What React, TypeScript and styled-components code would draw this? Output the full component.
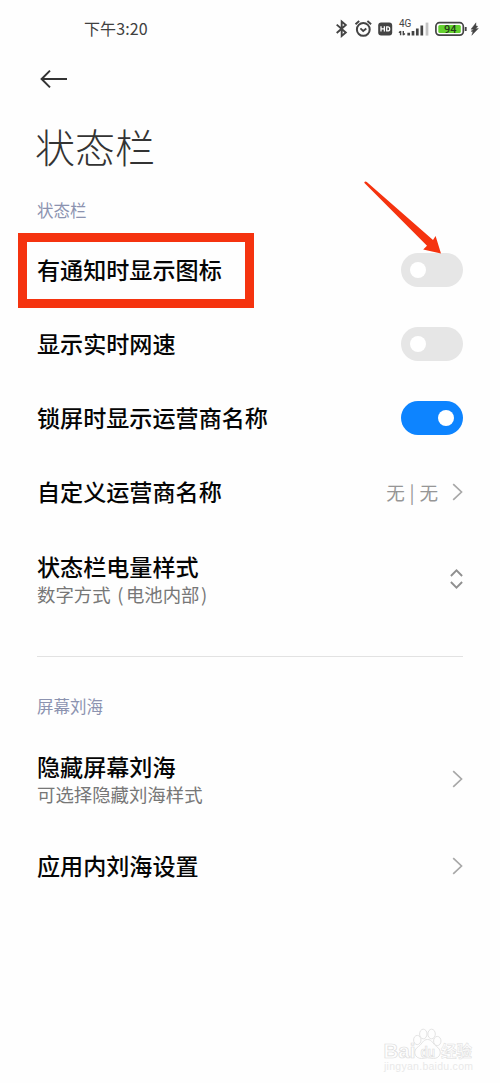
import React from 'react';
import styled, { createGlobalStyle } from 'styled-components';

const GlobalStyle = createGlobalStyle`
  * { box-sizing: border-box; }
  body {
    margin: 0;
    background: #fefefe;
    font-family: "Noto Sans CJK SC", sans-serif;
  }
`;

const Screen = styled.main`
  position: relative;
  width: 500px;
  height: 1083px;
  overflow: hidden;
  background: #fefefe;
  display: flex;
  flex-direction: column;
`;

const StatusBar = styled.header`
  height: 58px;
  padding: 0 20px 0 84px;
  display: flex;
  align-items: center;
  justify-content: space-between;
`;

const Clock = styled.time`
  padding-bottom: 2px;
  font-size: 16px;
  line-height: 20px;
  letter-spacing: 0.1px;
  color: #404040;
`;

const StatusIcons = styled.svg`
  width: 146px;
  height: 24px;
`;

const NavBar = styled.nav`
  height: 42px;
  padding-left: 40px;
  display: flex;
  align-items: center;
`;

const BackButton = styled.button`
  display: flex;
  padding: 0;
  border: 0;
  background: none;
`;

const PageTitle = styled.h1`
  margin: 0;
  padding: 16px 0 1px 35px;
  font-size: 40px;
  line-height: 60px;
  font-weight: 300;
  color: #333;
`;

const Section = styled.section`
  padding: 0 37px;
`;

const SectionLabel = styled.h2<{ $gap: number }>`
  margin: 0;
  padding-top: ${(p) => p.$gap}px;
  padding-bottom: 10px;
  font-size: 16.5px;
  line-height: 26px;
  font-weight: 400;
  color: #8c93b0;
`;

const Row = styled.div<{ $tall?: boolean }>`
  position: relative;
  height: ${(p) => (p.$tall ? 100 : 74)}px;
  display: flex;
  align-items: center;
  justify-content: space-between;
`;

const RowText = styled.div`
  display: flex;
  flex-direction: column;
`;

const RowTitle = styled.span<{ $single?: boolean }>`
  padding-bottom: ${(p) => (p.$single ? 2 : 0)}px;
  font-size: 23.1px;
  line-height: 30px;
  font-weight: 500;
  color: #050505;
`;

const RowNote = styled.span`
  font-size: 18.4px;
  line-height: 26px;
  word-spacing: -1px;
  color: #777;
`;

const Paren = styled.span<{ $side: 'open' | 'close' }>`
  padding-left: ${(p) => (p.$side === 'open' ? 3.5 : 1.5)}px;
  padding-right: ${(p) => (p.$side === 'open' ? 2.5 : 0)}px;
`;

const RowEnd = styled.div`
  display: flex;
  align-items: center;
  gap: 14px;
`;

const RowValue = styled.span`
  font-size: 18.6px;
  line-height: 26px;
  word-spacing: 0.6px;
  color: #969696;
`;

const Toggle = styled.span<{ $on?: boolean }>`
  width: 62px;
  height: 34px;
  padding: 0 9px;
  border-radius: 17px;
  display: flex;
  align-items: center;
  justify-content: ${(p) => (p.$on ? 'flex-end' : 'flex-start')};
  background: ${(p) => (p.$on ? '#0d84ff' : '#e6e6e6')};
`;

const Knob = styled.span`
  width: 16px;
  height: 16px;
  border-radius: 50%;
  background: #fff;
`;

const Divider = styled.hr`
  width: 426px;
  height: 1px;
  margin: 27px 0 0 37px;
  border: 0;
  background: #e2e2e2;
`;

const Highlight = styled.div`
  position: absolute;
  left: -19px;
  top: 0;
  width: 236px;
  height: 75px;
  border: 9px solid #f5330f;
`;

const Pointer = styled.svg`
  position: absolute;
  left: 360px;
  top: 178px;
`;

const Watermark = styled.svg`
  position: absolute;
  left: 380px;
  top: 1022px;
`;

const Chevron = () => (
  <svg width="11" height="18" viewBox="0 0 11 18" fill="none">
    <path d="M1.2 1.2 9.5 9 1.2 16.8" stroke="#a8a8a8" strokeWidth="1.7" />
  </svg>
);

const UpDown = () => (
  <svg width="13" height="20" viewBox="0 0 13 20" fill="none">
    <path d="M0.900 7 6.500 1.400 12.100 7M0.900 13 6.500 18.600 12.100 13" stroke="#8f8f8f" strokeWidth="1.900" />
  </svg>
);

const Switch = ({ on }: { on?: boolean }) => (
  <Toggle $on={on} role="switch" aria-checked={!!on}>
    <Knob />
  </Toggle>
);

type SettingProps = {
  title: string;
  note?: React.ReactNode;
  children: React.ReactNode;
  marked?: boolean;
};

const Setting = ({ title, note, children, marked }: SettingProps) => (
  <Row $tall={!!note}>
    <RowText>
      <RowTitle $single={!note}>{title}</RowTitle>
      {note && <RowNote>{note}</RowNote>}
    </RowText>
    <RowEnd>{children}</RowEnd>
    {marked && <Highlight />}
  </Row>
);

const SystemIcons = () => (
  <StatusIcons viewBox="334 17 146 24" fill="none" stroke="#444">
    <path d="M336.700 24.600 345.800 32.600 341.700 36V21.600L345.800 25 336.700 33" strokeWidth="1.900" />
    <circle cx="363.300" cy="29.400" r="6.400" strokeWidth="2" />
    <path d="M360.400 28.400 363.200 30.900 366.300 28.400M355.500 24.300 359.200 21M367.400 21 371.100 24.300" strokeWidth="1.900" />
    <rect x="378.200" y="22.400" width="14" height="13" rx="3" fill="#444" stroke="none" />
    <path d="M381 26.300v5.200M384.400 26.300v5.200M381 28.900h3.400M386.700 26.900v4h1.200q1.800 0 1.800-2t-1.800-2z" stroke="#fff" strokeWidth="1.300" />
    <text x="399" y="27.200" fontSize="10" fontFamily="Roboto, sans-serif" fill="#444" stroke="none">4G</text>
    <path d="M400.600 31v4.200M399 32.800 400.600 31.200M403.300 31v4.200M404.900 33.400 403.300 35" strokeWidth="1.400" />
    <path d="M408.700 32.700v2.900M413 31v4.600M417.300 28.600v7M421.800 25.400v10.200" strokeWidth="2.700" />
    <path d="M427 22.600v13" stroke="#c4c4c4" strokeWidth="2.700" />
    <rect x="435.900" y="22.700" width="27.400" height="12.400" rx="3.600" strokeWidth="1.700" />
    <rect x="438.300" y="24.900" width="22.500" height="8" rx="1.500" fill="#64d22f" stroke="none" />
    <path d="M465.700 27v4" strokeWidth="1.900" />
    <text x="444" y="32.600" fontSize="10.500" fontWeight="500" fontFamily="Roboto, sans-serif" textLength="12.500" lengthAdjust="spacingAndGlyphs" fill="#263c1c" stroke="none">94</text>
    <path d="M476 22.800 471 29.200h2.700L471 31.200l1.900.5-1.100 3.600 6.600-6.900h-2.900l2.300-2-1.900-.6z" fill="#444" stroke="#444" strokeWidth="0.400" />
  </StatusIcons>
);

const App = () => (
  <>
    <GlobalStyle />
    <Screen>
      <StatusBar>
        <Clock>下午3:20</Clock>
        <SystemIcons />
      </StatusBar>
      <NavBar>
        <BackButton aria-label="返回">
          <svg width="28" height="20" viewBox="0 0 28 20" fill="none">
            <path d="M27 10H1.800M10 1.600 1.600 10l8.400 8.400" stroke="#333" strokeWidth="2" />
          </svg>
        </BackButton>
      </NavBar>
      <PageTitle>状态栏</PageTitle>
      <Section>
        <SectionLabel $gap={20}>状态栏</SectionLabel>
        <Setting title="有通知时显示图标" marked><Switch /></Setting>
        <Setting title="显示实时网速"><Switch /></Setting>
        <Setting title="锁屏时显示运营商名称"><Switch on /></Setting>
        <Setting title="自定义运营商名称">
          <RowValue>无 | 无</RowValue>
          <Chevron />
        </Setting>
        <Setting
          title="状态栏电量样式"
          note={<>数字方式 <Paren $side="open">(</Paren>电池内部<Paren $side="close">)</Paren></>}
        >
          <UpDown />
        </Setting>
      </Section>
      <Divider />
      <Section>
        <SectionLabel $gap={36}>屏幕刘海</SectionLabel>
        <Setting title="隐藏屏幕刘海" note="可选择隐藏刘海样式"><Chevron /></Setting>
        <Setting title="应用内刘海设置"><Chevron /></Setting>
      </Section>
      <Pointer width="90" height="80" viewBox="360 178 90 80">
        <path d="M364.200 182.800Q365 180.800 366.800 182L433 240 435.600 236 441 253.600 423.200 249.600 427 245.800Z" fill="#f5330f" />
      </Pointer>
      <Watermark width="110" height="54" viewBox="380 1022 110 54">
        <g fill="#fefefe" stroke="#e0e0e0" strokeWidth="0.900">
          <ellipse cx="417.300" cy="1040" rx="3.700" ry="4.600" />
          <ellipse cx="423.300" cy="1034" rx="3.700" ry="4.800" />
          <ellipse cx="431.600" cy="1034" rx="3.700" ry="4.800" />
          <ellipse cx="437.300" cy="1041" rx="3.700" ry="4.600" />
          <path d="M427.500 1039.500c-4.500 0-5 4-9 7-6.500 4-4 12 3 12q6-1.500 12 0c7 0 9.500-8 3-12-4-3-4.500-7-9-7z" />
        </g>
        <g fill="#fefefe" stroke="#dcdcdc" strokeWidth="0.700" fontFamily="Liberation Sans, sans-serif" fontWeight="700">
          <text x="383.500" y="1057.500" fontSize="21" textLength="32" lengthAdjust="spacingAndGlyphs">Bai</text>
          <text x="420.500" y="1056.500" fontSize="14.500" textLength="14.500" lengthAdjust="spacingAndGlyphs">du</text>
          <text x="441" y="1056.500" fontSize="16" textLength="31" lengthAdjust="spacingAndGlyphs" fontFamily="Noto Sans CJK SC, sans-serif" strokeWidth="0.500">经验</text>
        </g>
        <text x="384" y="1069.500" fontSize="10.500" fill="#e9e9e9" fontFamily="Liberation Sans, sans-serif" textLength="89">jingyan.baidu.com</text>
      </Watermark>
    </Screen>
  </>
);

export default App;
